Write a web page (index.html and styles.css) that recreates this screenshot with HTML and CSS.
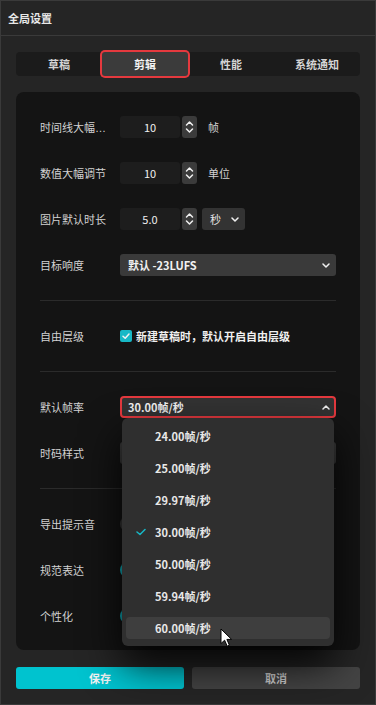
FILE: index.html
```html
<!DOCTYPE html>
<html lang="zh-CN">
<head>
  <meta charset="UTF-8">
  <meta name="viewport" content="width=device-width, initial-scale=1.0">
  <title>全局设置</title>
  <link rel="stylesheet" href="styles.css">
</head>
<body>
  <div class="window">
    <header class="titlebar">全局设置</header>

    <nav class="tabs">
      <div class="tab">草稿</div>
      <div class="tab active">剪辑</div>
      <div class="tab">性能</div>
      <div class="tab">系统通知</div>
    </nav>

    <main class="panel">
      <div class="row">
        <span class="label">时间线大幅调节</span>
        <div class="control">
          <div class="num">10</div>
          <div class="spin">
            <svg width="15" height="22" viewBox="0 0 15 22"><polyline points="4.5,9 7.5,6 10.5,9"/><polyline points="4.5,13 7.5,16 10.5,13"/></svg>
          </div>
          <span class="unit">帧</span>
        </div>
      </div>

      <div class="row">
        <span class="label">数值大幅调节</span>
        <div class="control">
          <div class="num">10</div>
          <div class="spin">
            <svg width="15" height="22" viewBox="0 0 15 22"><polyline points="4.5,9 7.5,6 10.5,9"/><polyline points="4.5,13 7.5,16 10.5,13"/></svg>
          </div>
          <span class="unit">单位</span>
        </div>
      </div>

      <div class="row">
        <span class="label">图片默认时长</span>
        <div class="control">
          <div class="num">5.0</div>
          <div class="spin">
            <svg width="15" height="22" viewBox="0 0 15 22"><polyline points="4.5,9 7.5,6 10.5,9"/><polyline points="4.5,13 7.5,16 10.5,13"/></svg>
          </div>
          <div class="unit-select">
            <span>秒</span>
            <svg class="chev" width="8" height="5" viewBox="0 0 8 5"><polyline points="1,1 4,4 7,1"/></svg>
          </div>
        </div>
      </div>

      <div class="row">
        <span class="label">目标响度</span>
        <div class="select">
          <span>默认 -23LUFS</span>
          <svg class="chev" width="8" height="5" viewBox="0 0 8 5"><polyline points="1,1 4,4 7,1"/></svg>
        </div>
      </div>

      <div class="divider"></div>

      <div class="row">
        <span class="label">自由层级</span>
        <label class="check">
          <span class="box">
            <svg width="12" height="12" viewBox="0 0 12 12"><polyline points="3,6.2 5.2,8.3 9,4"/></svg>
          </span>
          新建草稿时，默认开启自由层级
        </label>
      </div>

      <div class="divider"></div>

      <div class="row">
        <span class="label">默认帧率</span>
        <div class="select open">
          <span>30.00帧/秒</span>
          <svg class="chev" width="8" height="5" viewBox="0 0 8 5"><polyline points="1,4 4,1 7,4"/></svg>

          <ul class="dropdown">
            <li>24.00帧/秒</li>
            <li>25.00帧/秒</li>
            <li>29.97帧/秒</li>
            <li class="selected">
              <svg class="tick" width="10" height="8" viewBox="0 0 10 8"><polyline points="1,4 4,6.5 9,1.5"/></svg>
              30.00帧/秒
            </li>
            <li>50.00帧/秒</li>
            <li>59.94帧/秒</li>
            <li class="hover">60.00帧/秒</li>
          </ul>
        </div>
      </div>

      <div class="row">
        <span class="label">时码样式</span>
        <div class="select">
          <span>默认</span>
        </div>
      </div>

      <div class="divider"></div>

      <div class="row">
        <span class="label">导出提示音</span>
        <span class="toggle"></span>
      </div>

      <div class="row">
        <span class="label">规范表达</span>
        <span class="toggle on"></span>
      </div>

      <div class="row">
        <span class="label">个性化</span>
        <span class="toggle on"></span>
      </div>
    </main>

    <footer class="actions">
      <button class="btn primary">保存</button>
      <button class="btn">取消</button>
    </footer>

    <svg class="cursor" width="13" height="20" viewBox="0 0 13 20">
      <path d="M1 1 L1 15.5 L4.6 12.2 L7.2 18.2 L9.4 17.2 L6.9 11.4 L11.6 11.4 Z"/>
    </svg>
  </div>
</body>
</html>
```

FILE: styles.css
```css
* {
  box-sizing: border-box;
}
body {
  margin: 0;
  background: #252525;
  font-family: "Noto Sans CJK SC", "Noto Sans", sans-serif;
  font-size: 11px;
  color: #d2d2d2;
}
.window {
  position: relative;
  width: 376px;
  height: 705px;
  background: #252525;
  border: 1px solid #3a3a3a;
  overflow: hidden;
}
.titlebar {
  height: 35px;
  line-height: 34px;
  padding-left: 7px;
  border-bottom: 1px solid #3a3a3a;
  color: #e8e8e8;
  font-weight: 700;
}

/* tabs */
.tabs {
  display: grid;
  grid-template-columns: repeat(4, 1fr);
  height: 24px;
  margin: 16px 15px 0;
  background: #1b1b1b;
  border-radius: 4px;
}
.tab {
  text-align: center;
  line-height: 24px;
  font-weight: 700;
  color: #d4d4d4;
}
.tab.active {
  background: #3b3b3b;
  color: #f2f2f2;
  border-radius: 3px;
  box-shadow: 0 0 0 2px #e5393e;
}

/* panel */
.panel {
  display: flex;
  flex-direction: column;
  gap: 24px;
  margin: 16px 15px 0;
  padding: 24px 24px 23px;
  background: #141414;
  border-radius: 8px;
}
.row {
  display: flex;
  align-items: center;
  height: 22px;
}
.label {
  flex: none;
  width: 80px;
  padding-right: 10px;
  white-space: nowrap;
  overflow: hidden;
  text-overflow: ellipsis;
  font-family: "Liberation Sans", "Noto Sans CJK SC", sans-serif;
}
.divider {
  height: 1px;
  background: #2b2b2b;
}
.control {
  display: flex;
  align-items: center;
  height: 22px;
}
.num {
  width: 60px;
  height: 22px;
  line-height: 22px;
  text-align: center;
  background: #1d1d1d;
  border-radius: 3px;
  color: #f0f0f0;
}
.spin {
  width: 15px;
  height: 22px;
  margin-left: 2px;
  background: #3b3b3b;
  border-radius: 3px;
}
.spin svg, .chev, .tick, .box svg {
  display: block;
  fill: none;
  stroke: #f0f0f0;
  stroke-width: 1.5;
  stroke-linecap: round;
  stroke-linejoin: round;
}
.unit {
  margin-left: 11px;
}
.unit-select {
  display: flex;
  align-items: center;
  justify-content: space-between;
  width: 43px;
  height: 22px;
  margin-left: 5px;
  padding: 0 6px 0 8px;
  background: #333;
  border-radius: 3px;
  color: #e6e6e6;
}

/* select */
.select {
  position: relative;
  display: flex;
  align-items: center;
  justify-content: space-between;
  width: 216px;
  height: 22px;
  padding: 0 6px 0 8px;
  background: #3a3a3a;
  border-radius: 3px;
  font-weight: 700;
  color: #f2f2f2;
}
.select.open {
  background: #333;
  border: 2px solid #e5393e;
  padding: 0 4px 0 6px;
  border-radius: 4px;
}

/* checkbox */
.check {
  display: flex;
  align-items: center;
  gap: 4px;
  font-weight: 700;
  color: #f0f0f0;
}
.box {
  width: 12px;
  height: 12px;
  background: #17b8c6;
  border-radius: 2px;
}

/* toggles, mostly hidden under the dropdown */
.toggle {
  width: 28px;
  height: 16px;
  background: #3a3a3a;
  border-radius: 8px;
}
.toggle.on {
  background: #0fb8c6;
}

/* dropdown */
.dropdown {
  position: absolute;
  top: calc(100% + 2px);
  left: 0;
  right: 0;
  z-index: 10;
  display: flex;
  flex-direction: column;
  gap: 10px;
  margin: 0;
  padding: 7px 4px;
  list-style: none;
  background: #2f2f2f;
  border-radius: 6px;
  box-shadow: 0 18px 40px rgba(0, 0, 0, 0.9);
}
.dropdown li {
  position: relative;
  height: 22px;
  line-height: 22px;
  padding-left: 29px;
  border-radius: 4px;
  color: #e8e8e8;
}
.dropdown li.hover {
  background: #3e3e3e;
}
.tick {
  position: absolute;
  left: 10px;
  top: 7px;
  stroke: #17b8c6;
}

/* actions */
.actions {
  display: grid;
  grid-template-columns: 1fr 1fr;
  gap: 8px;
  margin: 17px 15px 0;
}
.btn {
  height: 22px;
  border: 0;
  border-radius: 3px;
  background: #444;
  color: #cfcfcf;
  font: 700 11px "Noto Sans CJK SC", "Noto Sans", sans-serif;
}
.btn.primary {
  background: #00c3cf;
  color: #f4f4f4;
}

.cursor {
  position: absolute;
  left: 219px;
  top: 627px;
  z-index: 20;
  fill: #fff;
  stroke: #000;
  stroke-width: 1;
}
```
